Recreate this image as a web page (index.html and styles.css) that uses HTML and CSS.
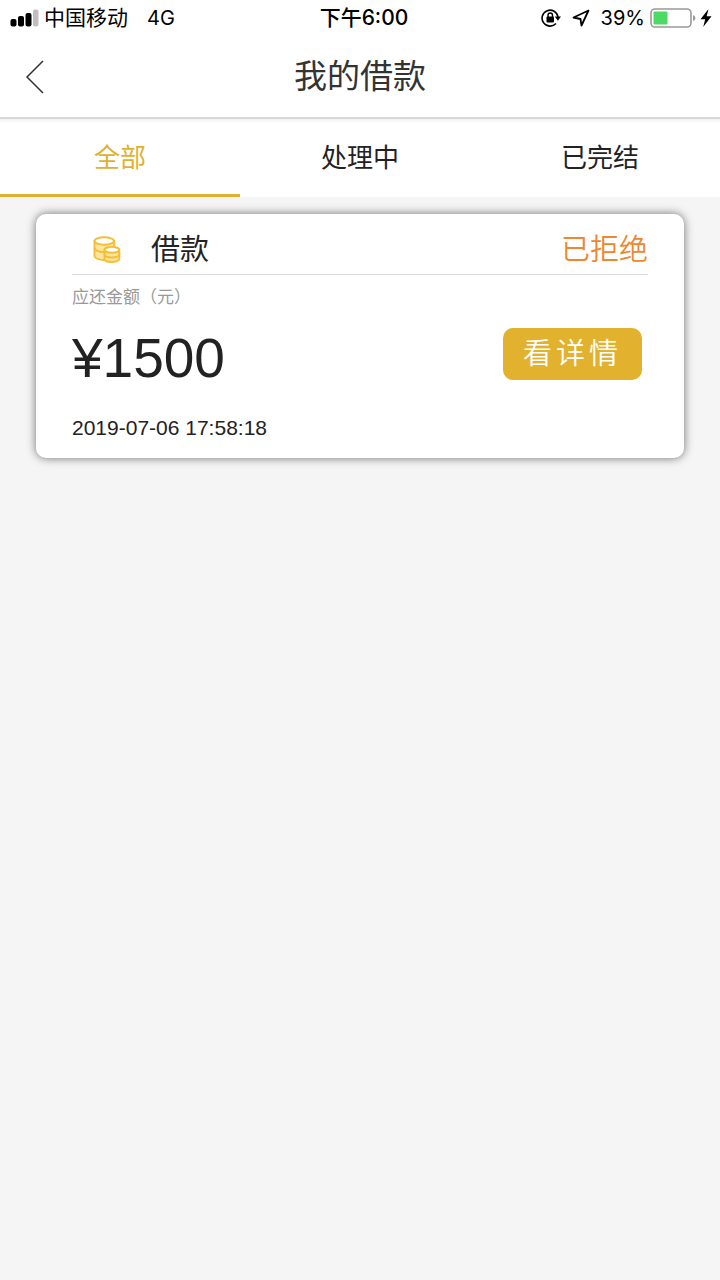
FILE: index.html
```html
<!DOCTYPE html>
<html lang="zh-CN">
<head>
<meta charset="utf-8">
<meta name="viewport" content="width=device-width, initial-scale=1">
<title>我的借款</title>
<link rel="stylesheet" href="styles.css">
</head>
<body>
<div class="status">
  <div class="status-side">
    <svg class="signal" width="30" height="18" viewBox="0 0 30 18" aria-hidden="true">
      <rect x="0.500" y="10" width="6" height="7.500" rx="2"/>
      <rect x="8" y="7" width="6" height="10.500" rx="2"/>
      <rect x="15.500" y="4" width="6" height="13.500" rx="2"/>
      <rect x="23" y="0.500" width="5.500" height="17" rx="2" fill="#bfbfbf"/>
    </svg>
    <span class="carrier">中国移动</span>
    <span class="network">4G</span>
  </div>
  <div class="status-time">下午6:00</div>
  <div class="status-side status-right">
    <svg width="20" height="20" viewBox="0 0 20 20" aria-hidden="true">
      <path d="M15 15.500A8 8 0 1 1 17 9" fill="none" stroke="#000" stroke-width="1.600"/>
      <path d="M13.800 8.500h6.200l-3.100 4.200z"/>
      <rect x="5.500" y="8.500" width="7.500" height="6" rx="1"/>
      <path d="M7 9V7.200a2.250 2.250 0 0 1 4.500 0V9" fill="none" stroke="#000" stroke-width="1.400"/>
    </svg>
    <svg class="locate" width="18" height="18" viewBox="0 0 18 18" aria-hidden="true">
      <path d="M16.500 1.500 1.500 8.500l7 1.500 1 6.500z" fill="none" stroke="#000" stroke-width="1.800" stroke-linejoin="round"/>
    </svg>
    <span class="percent">39%</span>
    <svg class="battery" width="46" height="20" viewBox="0 0 46 20" aria-hidden="true">
      <rect x="1" y="1" width="40" height="18" rx="4" fill="none" stroke="#999" stroke-width="1.600"/>
      <rect x="3.500" y="3.500" width="14" height="13" rx="1" fill="#4cd964"/>
      <path d="M43 7q2.500 1 2.500 3T43 13z" fill="#999"/>
    </svg>
    <svg width="12" height="20" viewBox="0 0 12 20" aria-hidden="true">
      <path d="M8.500 1 .5 11.200h4.700L3.200 19 11.500 8.300H6.700z"/>
    </svg>
  </div>
</div>
<header class="header">
  <button class="back" type="button" aria-label="返回">
    <svg width="20" height="34" viewBox="0 0 20 34" aria-hidden="true"><path d="M19 1 3 17l16 16" fill="none" stroke="#333" stroke-width="1.500"/></svg>
  </button>
  <h1 class="title">我的借款</h1>
</header>
<nav class="tabs">
  <a class="tab tab-active" href="#all" aria-current="page">全部</a>
  <a class="tab" href="#processing">处理中</a>
  <a class="tab" href="#finished">已完结</a>
</nav>
<main class="list">
  <article class="card">
    <div class="card-head">
      <svg class="coins" width="28" height="28" viewBox="0 0 28 28" aria-hidden="true">
        <g stroke="#f7bd33" stroke-width="1.900">
          <path d="M1.500 5v15c0 2 4.200 4 9.500 4s10-2 10-4V5z" fill="#fde5a0"/>
          <path d="M1.500 12c0 2.200 4.200 4 9.500 4s10-1.800 10-4" fill="none"/>
          <ellipse cx="11.200" cy="5" rx="9.700" ry="3.700" fill="#fff"/>
          <path d="M11.500 14v9c0 1.700 3.300 3 7.300 3s7.500-1.300 7.500-3v-9z" fill="#fde5a0"/>
          <path d="M11.500 18.500c0 1.700 3.300 3 7.300 3s7.500-1.300 7.500-3" fill="none"/>
          <ellipse cx="18.900" cy="13.800" rx="7.400" ry="2.900" fill="#fff"/>
        </g>
      </svg>
      <h2 class="card-title">借款</h2>
      <span class="state">已拒绝</span>
    </div>
    <p class="label">应还金额（元）</p>
    <div class="amount-row">
      <span class="amount">¥1500</span>
      <button class="detail" type="button">看详情</button>
    </div>
    <time class="date" datetime="2019-07-06T17:58:18">2019-07-06 17:58:18</time>
  </article>
</main>
</body>
</html>
```
FILE: styles.css
```css
* {
  box-sizing: border-box;
}

body {
  margin: 0;
  min-height: 100vh;
  background: #f5f5f5;
  color: #222;
  font-family: "Liberation Sans", "Noto Sans CJK SC", sans-serif;
}

h1, h2, p {
  margin: 0;
  font-weight: 400;
}

button {
  border: 0;
  font: inherit;
  cursor: pointer;
}

svg {
  display: block;
  flex: none;
}

.status {
  display: grid;
  grid-template-columns: 1fr auto 1fr;
  align-items: center;
  height: 36px;
  padding: 0 8px 0 10px;
  background: #fff;
  color: #000;
  font-family: Inter, "Noto Sans CJK SC", sans-serif;
  font-size: 20px;
  line-height: 36px;
}

.status-side {
  display: flex;
  align-items: center;
}

.carrier {
  margin-left: 4px;
  font-size: 21px;
}

.network {
  margin-left: 19px;
}

.status-time {
  padding-left: 6px;
  font-size: 21px;
  font-weight: 500;
}

.status-right {
  justify-content: flex-end;
}

.locate {
  margin: 0 11px;
}

.battery {
  margin: 0 4px 0 5px;
}

.header {
  display: grid;
  grid-template-columns: 72px 1fr 72px;
  align-items: center;
  height: 83px;
  border-bottom: 2px solid #d9d9d9;
  background: #fff;
}

.back {
  display: flex;
  align-items: center;
  height: 80px;
  padding: 0 24px;
  background: none;
}

.title {
  color: #333;
  font-size: 33px;
  line-height: 82px;
  text-align: center;
}

.tabs {
  display: grid;
  grid-template-columns: repeat(3, 1fr);
  background: linear-gradient(#f0f0f0, #fff 4px);
}

.tab {
  height: 78px;
  border-bottom: 3px solid transparent;
  color: #222;
  font-size: 26px;
  line-height: 78px;
  text-align: center;
  text-decoration: none;
}

.tab-active {
  border-color: #e2b02f;
  color: #e2b02f;
}

.list {
  padding: 17px 36px;
}

.card {
  padding: 0 36px 17px;
  border-radius: 10px;
  background: #fff;
  box-shadow: 0 0 10px rgba(0, 0, 0, 0.55);
}

.card-head {
  display: flex;
  align-items: center;
  height: 61px;
  padding-top: 12px;
  border-bottom: 1px solid #dedede;
  font-size: 29px;
  line-height: 48px;
}

.coins {
  margin: 0 30px 0 21px;
}

.card-title {
  font-size: 29px;
}

.state {
  margin-left: auto;
  color: #ed8730;
  font-weight: 350;
}

.label {
  padding-top: 8px;
  color: #999;
  font-size: 17px;
  line-height: 30px;
}

.amount-row {
  display: flex;
  align-items: center;
  justify-content: space-between;
  height: 90px;
  padding-right: 6px;
}

.amount {
  font-size: 55px;
  line-height: 64px;
}

.detail {
  height: 52px;
  margin-bottom: 8px;
  padding: 0 20px;
  border-radius: 10px;
  background: #e2b22f;
  color: #fff;
  font-size: 29px;
  font-weight: 350;
  line-height: 52px;
  letter-spacing: 4px;
}

.date {
  display: block;
  padding-top: 12px;
  font-size: 21px;
  line-height: 26px;
}
```
